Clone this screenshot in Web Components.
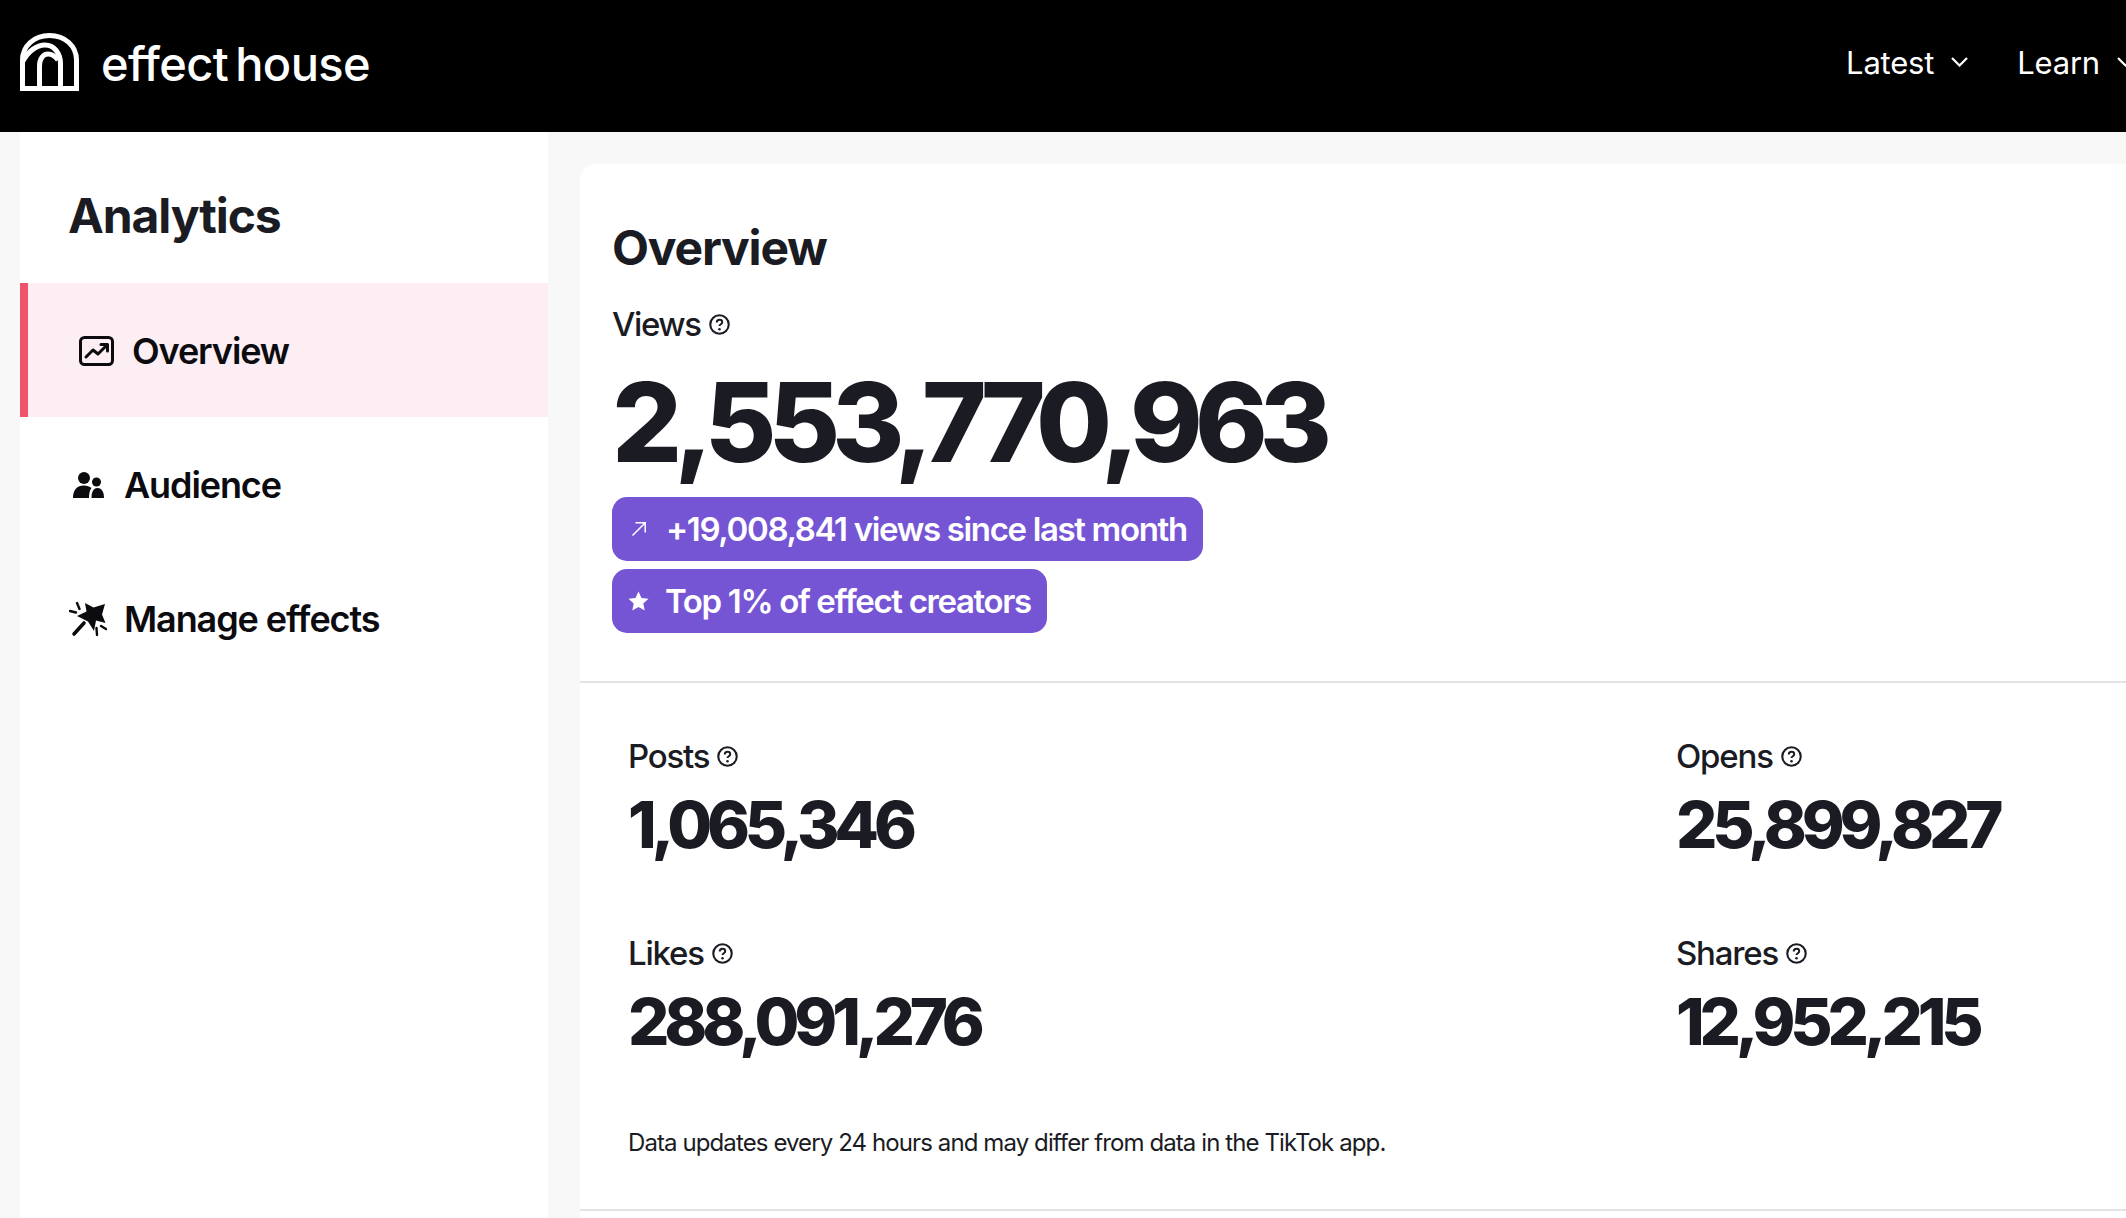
<!DOCTYPE html>
<html>
<head>
<meta charset="utf-8">
<title>Analytics</title>
<style>
  html, body { margin: 0; height: 100%; overflow: hidden; background: #f8f8f8; }
  body { font-family: Inter, "Liberation Sans", sans-serif; color: #1a1b23; }
</style>
</head>
<body>
<eh-app>
  <eh-header slot="header"></eh-header>
  <eh-sidebar slot="side" heading="Analytics">
    <eh-nav-item active icon="chart" style="--pad:51px;--gap:18px">Overview</eh-nav-item>
    <eh-nav-item icon="people" style="--pad:53px;--gap:20px">Audience</eh-nav-item>
    <eh-nav-item icon="wand" style="--pad:49px;--gap:17px">Manage effects</eh-nav-item>
  </eh-sidebar>
  <eh-overview slot="main">
    <eh-pill icon="arrow" slot="pills" style="--icon-gap:19px;--pill-pad:19px">+19,008,841 views since last month</eh-pill>
    <eh-pill icon="star" slot="pills" style="--icon-gap:16px;--pill-pad:16px">Top 1% of effect creators</eh-pill>
    <eh-stat slot="stats" label="Posts" value="1,065,346"></eh-stat>
    <eh-stat slot="stats" label="Opens" value="25,899,827"></eh-stat>
    <eh-stat slot="stats" label="Likes" value="288,091,276"></eh-stat>
    <eh-stat slot="stats" label="Shares" value="12,952,215"></eh-stat>
  </eh-overview>
</eh-app>

<script>
class EhApp extends HTMLElement {
  constructor() {
    super();
    this.attachShadow({ mode: "open" }).innerHTML = `
      <style>
        :host { display: flex; flex-direction: column; height: 100vh; overflow: hidden; }
        .body { flex: 1; display: flex; padding-left: 20px; min-height: 0; }
      </style>
      <slot name="header"></slot>
      <div class="body">
        <slot name="side"></slot>
        <slot name="main"></slot>
      </div>
    `;
  }
}

class EhHeader extends HTMLElement {
  constructor() {
    super();
    const chevron = `<svg width="17" height="10" viewBox="0 0 17 10" fill="none" stroke="#fff" stroke-width="2.2"><path d="M1 1l7.5 7.5L16 1"/></svg>`;
    this.attachShadow({ mode: "open" }).innerHTML = `
      <style>
        :host { display: flex; flex: none; height: 132px; background: #000; color: #fff; align-items: center; padding-left: 20px; overflow: hidden; }
        .word { margin-left: 22px; font: 500 47px/1 Inter, sans-serif; letter-spacing: -0.6px; word-spacing: -5px; margin-top: -6px; white-space: nowrap; }
        nav { margin-left: auto; display: flex; gap: 49px; font: 400 31px/1 Inter, sans-serif; letter-spacing: -0.2px; margin-right: -8px; margin-top: -8px; }
        nav span { display: flex; align-items: center; gap: 17px; }
        nav svg { flex: none; }
        svg.logo { display: block; margin-top: -8px; }
      </style>
      <svg class="logo" width="59" height="58" viewBox="0 0 59 58" fill="none" stroke="#fff" stroke-width="5">
        <path d="M2.500 55.500V27C2.500 13 14 2.500 29.500 2.500S56.500 13 56.500 27V55.500Z"/>
        <path d="M2.500 29C8 18 17 12 25 12C34 12 40.500 20 40.500 31V55"/>
        <path d="M19.500 55V33C19.500 26 23 21 28 21C32 21 35 23 38 27"/>
      </svg>
      <div class="word">effect house</div>
      <nav><span>Latest ${chevron}</span><span>Learn ${chevron}</span></nav>
    `;
  }
}

class EhSidebar extends HTMLElement {
  constructor() {
    super();
    this.attachShadow({ mode: "open" }).innerHTML = `
      <style>
        :host { display: block; flex: none; width: 528px; background: #fff; }
        h1 { margin: 0; height: 151px; box-sizing: border-box; padding: 56px 0 0 48px; font: 700 48px/56px Inter, sans-serif; letter-spacing: -1.100px; color: #1a1b23; }
      </style>
      <h1></h1>
      <slot></slot>
    `;
    this.shadowRoot.querySelector("h1").textContent = this.getAttribute("heading");
  }
}

const NAV_ICONS = {
  chart: `<svg width="35" height="30" viewBox="0 0 35 30" fill="none" stroke="#0b0b10" stroke-width="3" stroke-linecap="round" stroke-linejoin="round"><rect x="1.500" y="1.500" width="32" height="27" rx="4"/><path d="M7 21l7-7 5 4 9-9"/><path d="M22 8.500h6.500V15"/></svg>`,
  people: `<svg width="31" height="28" viewBox="0 0 31 28" fill="#0b0b10"><circle cx="11" cy="7" r="6"/><circle cx="23.500" cy="11" r="4.500"/><path d="M0 27c0-8 4-12.500 11-12.500 3 0 5.500 1 7.500 2.500-2 2.500-2.500 6-2.500 10z"/><path d="M18.500 27c0-5.500 1.500-10 6-10s6.500 4.500 6.500 10z"/></svg>`,
  wand: `<svg width="38" height="36" viewBox="9 20 38 36" fill="#0b0b10"><path d="M25 22l8.500 4.500 11.500-3.500-3 10.500 3.500 8.500-9.500-2.500-2 10.500-6-9.500-11-5.500 9.500-4.500z"/><g stroke="#0b0b10" fill="none" stroke-linecap="round"><path stroke-width="3.600" d="M14 53l10-11"/><path stroke-width="2.400" d="M10 30l6 1.500M17 22l2.500 6M36.500 47l.5 7M41 45l5 3"/></g></svg>`
};

class EhNavItem extends HTMLElement {
  constructor() {
    super();
    this.attachShadow({ mode: "open" }).innerHTML = `
      <style>
        :host { display: flex; align-items: center; box-sizing: border-box; height: 134px; padding: 1px 0 0 var(--pad); gap: var(--gap); color: #0b0b10; font: 600 36px/1 Inter, sans-serif; letter-spacing: -1.100px; }
        :host([active]) { background: #fceef3; border-left: 8px solid #ef5369; }
        svg { display: block; }
      </style>
      ${NAV_ICONS[this.getAttribute("icon")]}
      <slot></slot>
    `;
  }
}

class EhHelp extends HTMLElement {
  constructor() {
    super();
    this.attachShadow({ mode: "open" }).innerHTML = `
      <style>
        :host { display: inline-block; width: 21px; height: 21px; }
        svg { display: block; }
      </style>
      <svg width="21" height="21" viewBox="0 0 20 20" fill="none" stroke="#1a1b23" stroke-width="2">
        <circle cx="10" cy="10" r="8.800"/>
        <path d="M7.400 8c0-1.500 1.100-2.500 2.600-2.500s2.600 1 2.600 2.300c0 1.800-2.600 2-2.600 3.700" stroke-width="1.900"/>
        <circle cx="10" cy="14.500" r="1.200" fill="#1a1b23" stroke="none"/>
      </svg>
    `;
  }
}

const PILL_ICONS = {
  arrow: `<svg width="16" height="16" viewBox="0 0 16 16" fill="none" stroke="#fff" stroke-width="1.500"><path d="M1.500 14.500L14 2M4.500 1.800H14.200V11.500"/></svg>`,
  star: `<svg width="21" height="20" viewBox="0 0 21 20" fill="#fff"><path d="M10.500 0.500l3 6.500 7 .8-5.200 4.700 1.400 7-6.200-3.500-6.200 3.500 1.400-7L.5 7.800l7-.8z"/></svg>`
};

class EhPill extends HTMLElement {
  constructor() {
    super();
    this.attachShadow({ mode: "open" }).innerHTML = `
      <style>
        :host { display: flex; align-items: center; width: fit-content; box-sizing: border-box; height: 64px; padding: 0 16px 0 var(--pill-pad); gap: var(--icon-gap); background: #7655d5; border-radius: 15px; color: #fff; font: 600 33px/1 Inter, sans-serif; letter-spacing: -1.350px; }
        svg { display: block; flex: none; }
      </style>
      ${PILL_ICONS[this.getAttribute("icon")]}
      <slot></slot>
    `;
  }
}

class EhStat extends HTMLElement {
  constructor() {
    super();
    this.attachShadow({ mode: "open" }).innerHTML = `
      <style>
        :host { display: block; height: 197px; color: #1a1b23; }
        .label { display: flex; align-items: center; gap: 8px; height: 40px; font: 500 33px/40px Inter, sans-serif; letter-spacing: -1.200px; }
        .value { margin-top: 11px; font: 800 65px/76px Inter, sans-serif; letter-spacing: -5.200px; }
      </style>
      <div class="label"><span></span><eh-help></eh-help></div>
      <div class="value"></div>
    `;
    this.shadowRoot.querySelector("span").textContent = this.getAttribute("label");
    this.shadowRoot.querySelector(".value").textContent = this.getAttribute("value");
  }
}

class EhOverview extends HTMLElement {
  constructor() {
    super();
    this.attachShadow({ mode: "open" }).innerHTML = `
      <style>
        :host { display: block; flex: 1; min-width: 0; margin: 32px 0 0 32px; background: #fff; border-radius: 16px 0 0 0; color: #1a1b23; }
        .top { box-sizing: border-box; height: 519px; padding: 54px 0 0 32px; border-bottom: 2px solid #e4e4e7; }
        h2 { margin: 0; font: 700 48px/60px Inter, sans-serif; letter-spacing: -1.200px; }
        .views { display: flex; align-items: center; gap: 8px; margin-top: 26px; height: 40px; font: 500 33px/40px Inter, sans-serif; letter-spacing: -1.400px; }
        .big { margin-top: 18px; font: 800 110px/120px Inter, sans-serif; letter-spacing: -7.900px; white-space: nowrap; }
        .pills { display: flex; flex-direction: column; gap: 8px; align-items: flex-start; margin-top: 15px; }
        .lower { box-sizing: border-box; height: 528px; padding: 53px 0 0 48px; border-bottom: 2px solid #e4e4e7; }
        .grid { display: grid; grid-template-columns: 1048px 1fr; }
        p { margin: -3px 0 0; font: 400 24px/32px Inter, sans-serif; letter-spacing: -0.9px; color: #1a1b23; }
      </style>
      <div class="top">
        <h2>Overview</h2>
        <div class="views"><span>Views</span><eh-help></eh-help></div>
        <div class="big">2,553,770,963</div>
        <div class="pills"><slot name="pills"></slot></div>
      </div>
      <div class="lower">
        <div class="grid"><slot name="stats"></slot></div>
        <p>Data updates every 24 hours and may differ from data in the TikTok app.</p>
      </div>
    `;
  }
}

customElements.define("eh-help", EhHelp);
customElements.define("eh-app", EhApp);
customElements.define("eh-header", EhHeader);
customElements.define("eh-sidebar", EhSidebar);
customElements.define("eh-nav-item", EhNavItem);
customElements.define("eh-pill", EhPill);
customElements.define("eh-stat", EhStat);
customElements.define("eh-overview", EhOverview);
</script>
</body>
</html>
